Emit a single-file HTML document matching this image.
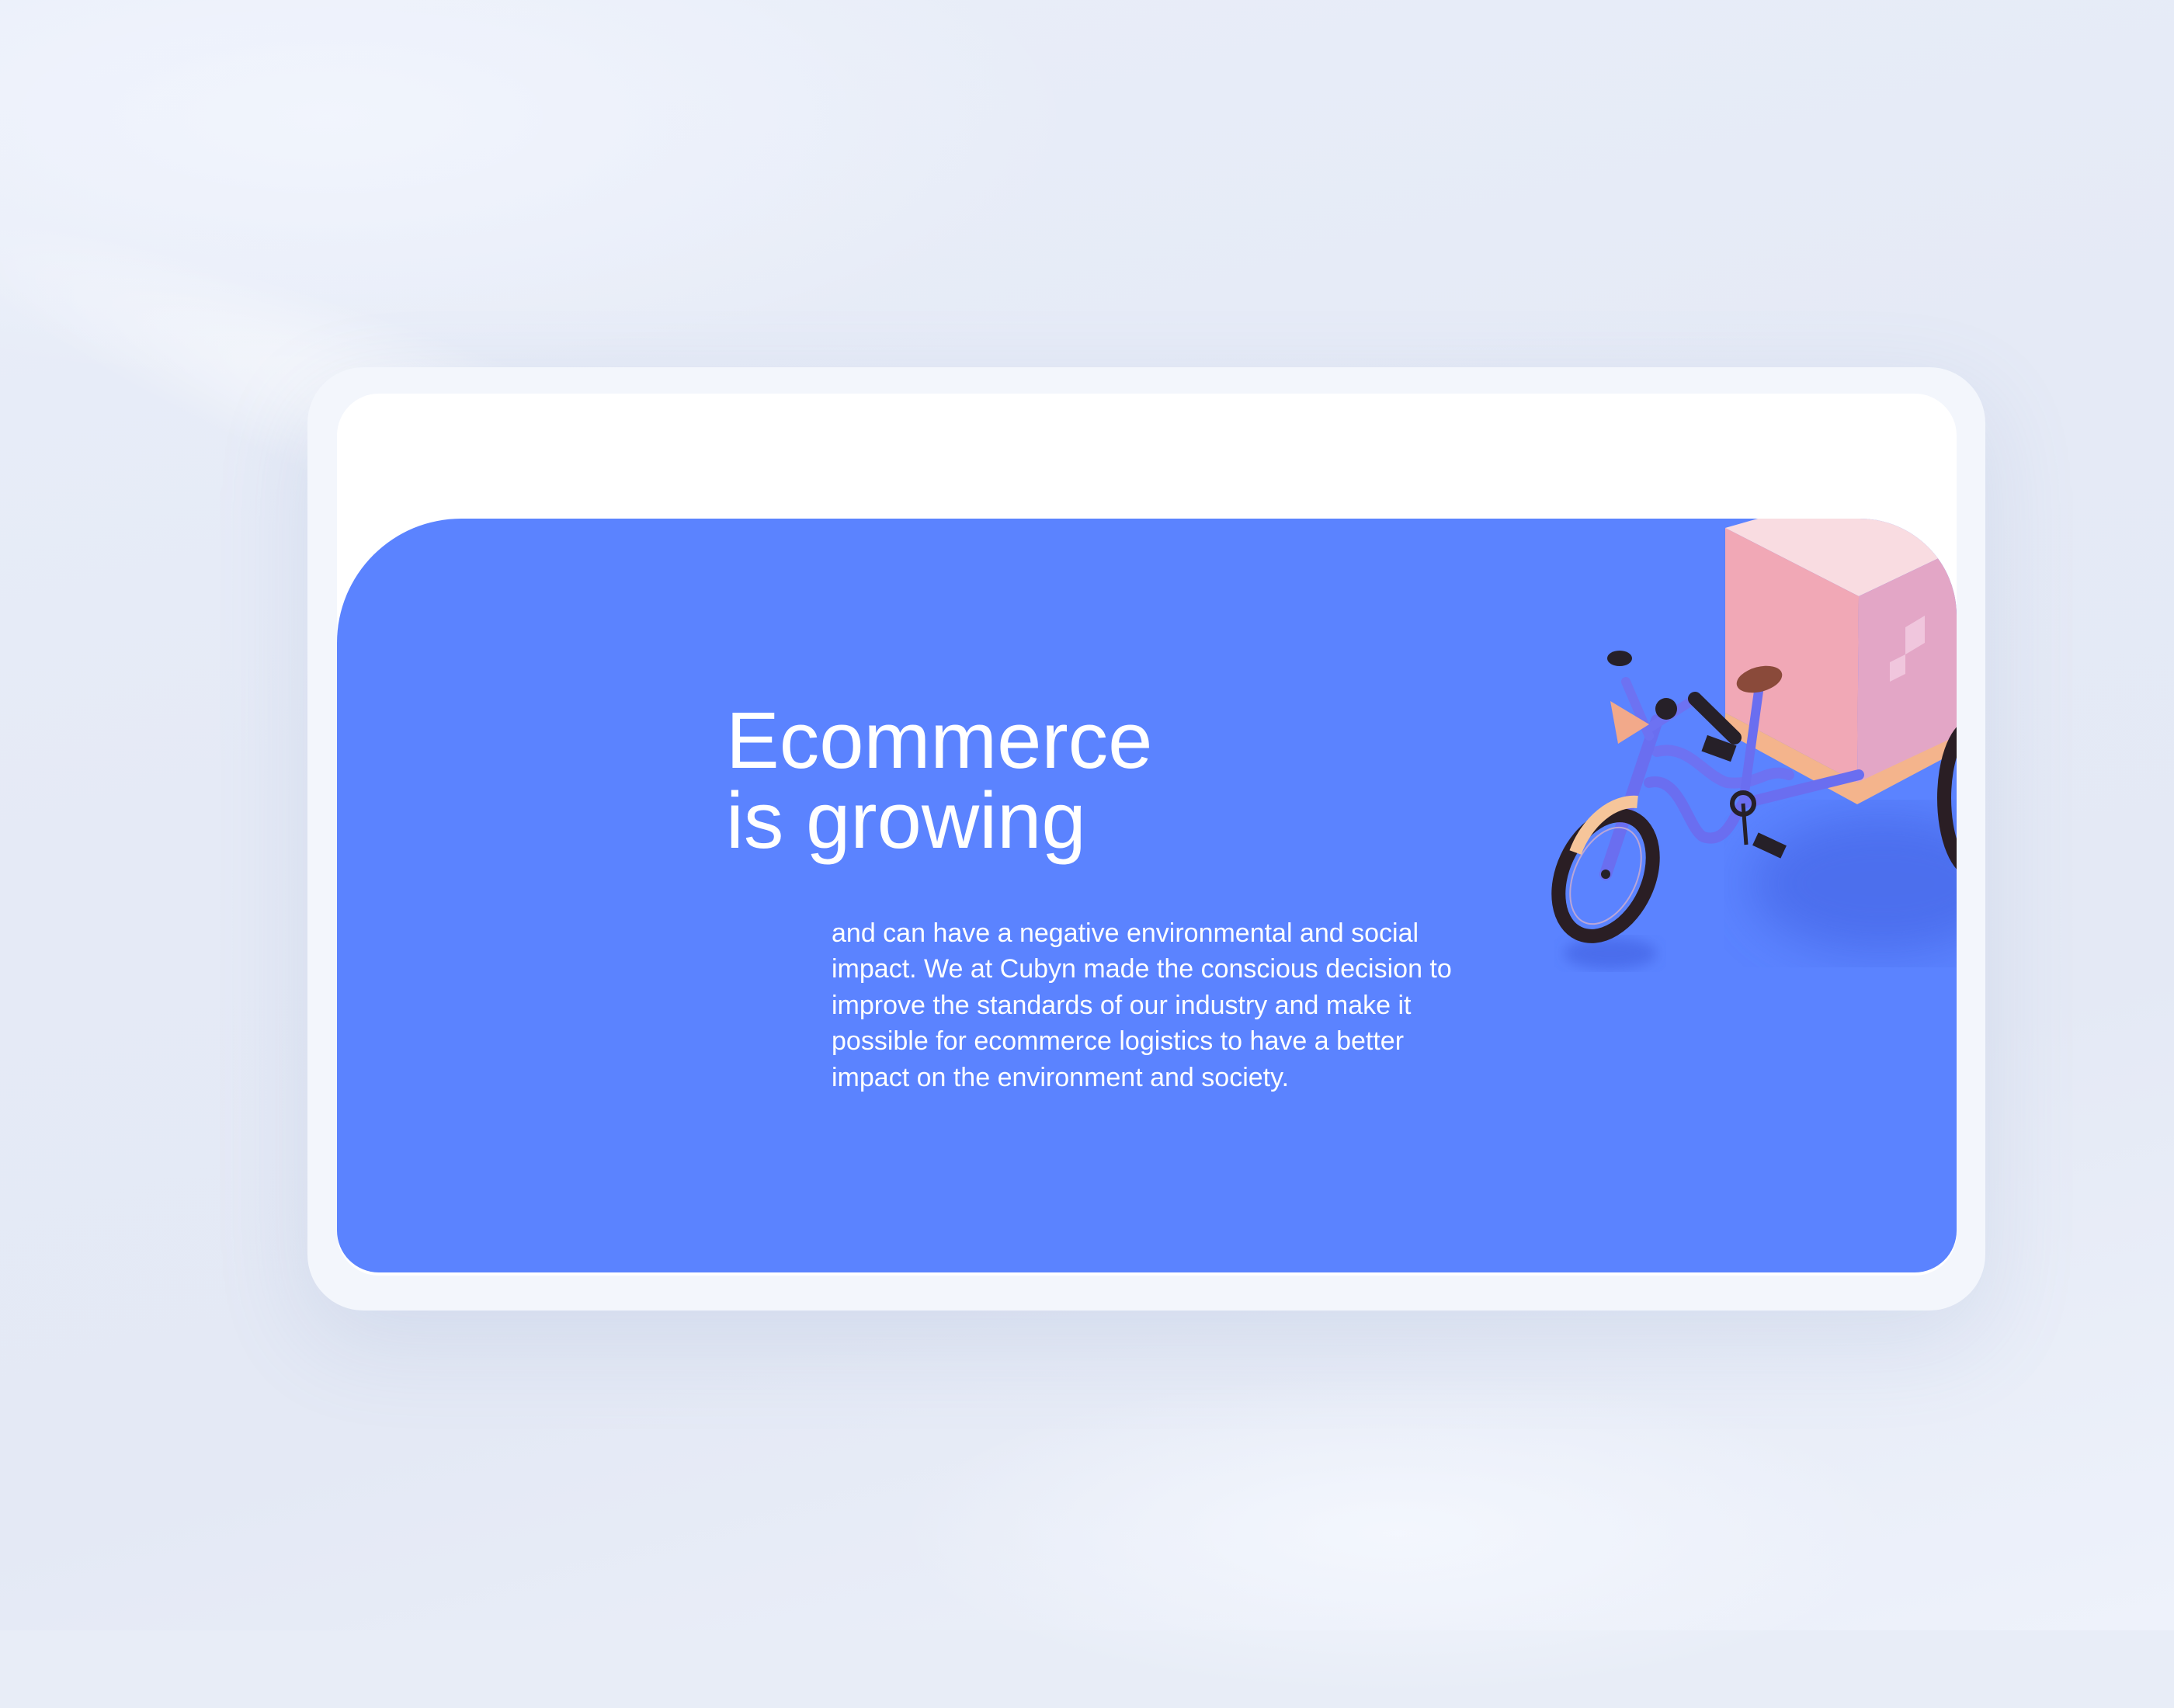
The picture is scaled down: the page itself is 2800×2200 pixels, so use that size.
<!DOCTYPE html>
<html><head><meta charset="utf-8"><style>
html,body{margin:0;padding:0;background:#e8edf7}
body{width:2800px;height:2100px;overflow:hidden;position:relative;font-family:"Liberation Sans",sans-serif;
background:linear-gradient(165deg,#e9eef9 0%,#e5eaf6 40%,#e4e9f5 70%,#eef2fb 100%);}
.streak{position:absolute;left:-100px;top:150px;width:1700px;height:260px;background:radial-gradient(ellipse at 55% 50%,rgba(255,255,255,.8),rgba(255,255,255,0) 65%);transform:rotate(22deg);transform-origin:0 0}
.streak2{position:absolute;left:0;top:0;width:1400px;height:500px;background:radial-gradient(ellipse at 30% 30%,rgba(245,248,255,.7),rgba(255,255,255,0) 70%)}
.glow{position:absolute;left:1100px;top:1750px;width:1400px;height:450px;background:radial-gradient(ellipse,rgba(246,249,255,.8),rgba(255,255,255,0) 65%)}
.frame{position:absolute;left:396px;top:473px;width:2161px;height:1215px;border-radius:72px;background:#f3f6fc;box-shadow:0 40px 120px rgba(120,140,190,.16)}
.inner{position:absolute;left:434px;top:507px;width:2086px;height:1136px;border-radius:54px;background:#fff;overflow:hidden}
.blue{position:absolute;left:434px;top:668px;width:2086px;height:971px;background:#5b83ff;border-radius:160px 125px 54px 54px;overflow:hidden}
h1{position:absolute;left:935px;top:902px;margin:0;font-weight:400;font-size:103px;line-height:103px;color:#fff;letter-spacing:0}
p{position:absolute;left:1071px;top:1179px;margin:0;width:835px;font-size:34px;line-height:46.4px;color:#fff}
</style></head><body>
<div class="streak2"></div><div class="streak"></div><div class="glow"></div>
<div class="frame"></div>
<div class="inner"></div>
<div class="blue">
<svg width="2086" height="971" style="position:absolute;left:0;top:0">
<defs><filter id="b"><feGaussianBlur stdDeviation="30"/></filter><filter id="s"><feGaussianBlur stdDeviation="8"/></filter></defs>
<ellipse cx="1990" cy="470" rx="170" ry="90" fill="#3f5fe0" opacity=".55" filter="url(#b)"/>
<ellipse cx="1640" cy="560" rx="60" ry="20" fill="#3f5fe0" opacity=".6" filter="url(#s)"/>
<polygon points="1788,12 1830,0 2086,0 2086,40 1960,100" fill="#f9dce1"/>
<polygon points="1788,12 1960,100 1958,340 1788,250" fill="#f1a8b6"/>
<polygon points="1960,100 2086,40 2086,290 1958,340" fill="#e3a6c6"/>
<polygon points="2020,140 2045,125 2045,160 2020,175" fill="#f0c6dd"/>
<polygon points="2000,185 2020,175 2020,200 2000,210" fill="#f0c6dd"/>
<polygon points="1788,250 1958,340 2086,280 2086,300 1958,368 1788,275" fill="#f4b48c"/>
<ellipse cx="2110" cy="360" rx="40" ry="95" fill="none" stroke="#2a1e24" stroke-width="18"/>
<path d="M1700,300 C1740,290 1760,330 1790,340 C1830,345 1840,320 1870,330" stroke="#6d72f2" stroke-width="14" fill="none" stroke-linecap="round"/>
<path d="M1690,340 C1730,330 1740,400 1760,410 C1790,420 1800,380 1811,367 L1960,330" stroke="#6a6ef0" stroke-width="14" fill="none" stroke-linecap="round"/>
<path d="M1700,260 L1634,458" stroke="#6a6ef0" stroke-width="16" stroke-linecap="round"/>
<path d="M1832,215 L1811,367" stroke="#6a6ef0" stroke-width="12"/>
<path d="M1660,210 L1690,280 M1690,270 L1749,232" stroke="#6d72f2" stroke-width="12" stroke-linecap="round"/>
<path d="M1749,232 L1800,282" stroke="#262028" stroke-width="18" stroke-linecap="round"/>
<ellipse cx="1652" cy="180" rx="16" ry="10" fill="#262028"/>
<circle cx="1712" cy="245" r="14" fill="#262028"/>
<path d="M1640,235 L1690,265 L1650,290 Z" fill="#f2a98a"/>
<ellipse cx="1832" cy="207" rx="30" ry="16" fill="#8a4a3a" transform="rotate(-15 1832 207)"/>
<rect x="1760" y="285" width="40" height="22" fill="#262028" transform="rotate(20 1780 296)"/>
<circle cx="1811" cy="367" r="14" fill="none" stroke="#262028" stroke-width="6"/>
<path d="M1811,367 L1815,420" stroke="#262028" stroke-width="5"/>
<rect x="1825" y="412" width="40" height="18" fill="#262028" transform="rotate(25 1845 421)"/>
<ellipse cx="1634" cy="460" rx="55" ry="82" fill="none" stroke="#2a1e24" stroke-width="18" transform="rotate(25 1634 460)"/>
<ellipse cx="1634" cy="460" rx="40" ry="66" fill="none" stroke="#b9a6d8" stroke-width="2" transform="rotate(25 1634 460)"/>
<path d="M1600,440 A60,85 25 0 1 1680,375" stroke="#f6c59a" stroke-width="16" fill="none" transform="translate(-5,-10)"/>
<circle cx="1634" cy="458" r="6" fill="#262028"/>
</svg>
</div>
<h1>Ecommerce<br>is growing</h1>
<p>and can have a negative environmental and social impact. We at Cubyn made the conscious decision to improve the standards of our industry and make it possible for ecommerce logistics to have a better impact on the environment and society.</p>
</body></html>
